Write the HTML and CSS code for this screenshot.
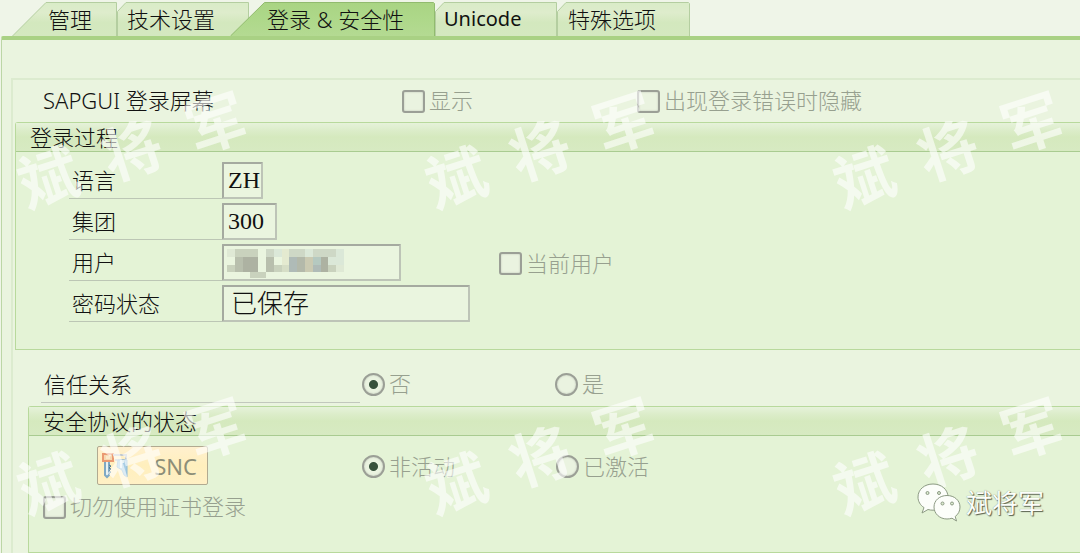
FILE: index.html
```html
<!DOCTYPE html>
<html lang="zh-CN">
<head>
<meta charset="utf-8">
<title>登录 &amp; 安全性</title>
<link rel="stylesheet" href="styles.css">
</head>
<body>
<main class="page">
  <nav class="tabs">
    <button type="button" class="tab tab-first">
      <svg class="tab-shape" viewBox="0 0 105 34"><path d="M.5 34 34 .5H104.500V34" fill="url(#tabFill)" stroke="#b4cea0"/></svg>
      <span>管理</span>
    </button>
    <button type="button" class="tab tab-second">
      <svg class="tab-shape" viewBox="0 0 132 34"><path d="M.5 34V9.500L9 .5H131.500V34" fill="url(#tabFill)" stroke="#b4cea0"/></svg>
      <span>技术设置</span>
    </button>
    <button type="button" class="tab tab-active">
      <svg class="tab-shape" viewBox="0 0 205 34"><path d="M.5 34 34.500.5H203.500L204.500 1.500V34" fill="url(#activeFill)" stroke="#91bb6e"/></svg>
      <span>登录 &amp; 安全性</span>
    </button>
    <button type="button" class="tab tab-unicode">
      <svg class="tab-shape" viewBox="0 0 122 34"><path d="M.5 34V9.500L9 .5H121.500V34" fill="url(#tabFill)" stroke="#b4cea0"/></svg>
      <span>Unicode</span>
    </button>
    <button type="button" class="tab tab-last">
      <svg class="tab-shape" viewBox="0 0 133 34"><path d="M.5 34V9.500L9 .5H131.500L132.500 1.500V34" fill="url(#tabFill)" stroke="#b4cea0"/>
        <defs>
          <linearGradient id="tabFill" x1="0" y1="0" x2="0" y2="1"><stop offset="0" stop-color="#d9ecc7"/><stop offset=".3" stop-color="#deeccc"/><stop offset=".6" stop-color="#d3e8be"/><stop offset="1" stop-color="#d4e8c0"/></linearGradient>
          <linearGradient id="activeFill" x1="0" y1="0" x2="0" y2="1"><stop offset="0" stop-color="#a9d483"/><stop offset=".5" stop-color="#aed88a"/><stop offset="1" stop-color="#b4da92"/></linearGradient>
        </defs>
      </svg>
      <span>特殊选项</span>
    </button>
  </nav>

  <section class="panel">
    <div class="frame">
      <div class="screen-row">
        <span class="row-title">SAPGUI 登录屏幕</span>
        <label class="option"><input type="checkbox" class="check">显示</label>
        <label class="option"><input type="checkbox" class="check">出现登录错误时隐藏</label>
      </div>

      <section class="group">
        <h2 class="group-title">登录过程</h2>
        <div class="fields">
          <div class="field">
            <label class="field-label" for="lang">语言</label>
            <input class="text-box latin w-lang" id="lang" type="text" value="ZH">
          </div>
          <div class="field">
            <label class="field-label" for="client">集团</label>
            <input class="text-box latin w-client" id="client" type="text" value="300">
          </div>
          <div class="field">
            <label class="field-label" for="user">用户</label>
            <div class="user-box">
              <input class="text-box w-user" id="user" type="text">
              <svg class="mosaic" viewBox="0 0 15 4" preserveAspectRatio="none" shape-rendering="crispEdges">
                <path fill="#dfe9d5" d="M0 0h1v1H0zM14 2h1v1h-1z"/>
                <path fill="#c9d2bd" d="M1 0h3v1H1zM0 2h1v1H0zM3 3h2v.7H3zM6 2h1v1H6zM13 2h1v1h-1z"/>
                <path fill="#ced8c6" d="M5 0h1v1H5zM8 0h2v1H8zM11 0h3v1h-3z"/>
                <path fill="#dbe8d8" d="M6 0h1v1H6zM10 0h1v1h-1zM14 0h1v2h-1zM13 1h1v1h-1z"/>
                <path fill="#e4ead0" d="M7 0h1v2H7z"/>
                <path fill="#d6dec6" d="M7 2h1v1H7z"/>
                <path fill="#b8bfad" d="M1 1h1v2H1zM5 1h1v2H5z"/>
                <path fill="#adb2a2" d="M2 1h2v2H2zM12 1h1v2h-1z"/>
                <path fill="#afbbb7" d="M8 1h1v2H8zM11 2h1v1h-1z"/>
                <path fill="#b3b9aa" d="M9 1h1v2H9z"/>
                <path fill="#cacab2" d="M10 1h1v2h-1z"/>
                <path fill="#b5c9c0" d="M11 1h1v1h-1z"/>
              </svg>
            </div>
            <label class="option current-user"><input type="checkbox" class="check">当前用户</label>
          </div>
          <div class="field">
            <label class="field-label" for="pwd">密码状态</label>
            <input class="text-box w-pwd" id="pwd" type="text" value="已保存">
          </div>
        </div>
      </section>

      <div class="trust-row">
        <span class="trust-label">信任关系</span>
        <label class="option"><input type="radio" class="radio" name="trust" checked>否</label>
        <label class="option"><input type="radio" class="radio" name="trust">是</label>
      </div>

      <section class="group group-security">
        <h2 class="group-title">安全协议的状态</h2>
        <div class="snc-row">
          <button type="button" class="snc">
            <svg class="snc-icon" viewBox="0 0 28 28" fill="none">
              <path d="M2 2h10v7H2z" fill="#f6d8b0" stroke="#ea9a72" stroke-width="2"/>
              <path d="M5 4h4v3H5z" fill="#fbe9c8"/>
              <path d="M12 3h13v5H14" stroke="#c3c9cc" stroke-width="2"/>
              <path d="M4 10v13l2 2 2-2V10" fill="#e8f2f2" stroke="#7fa9c4" stroke-width="2"/>
              <path d="M8 13l2 1-2 2 2 1-2 2 2 1-2 2" stroke="#4f7991" stroke-width="1"/>
              <path d="M17 8h9v17l-3-2-2-5-5-3z" fill="#a7cde4" stroke="#8db9d5"/>
              <path d="M20 8v8M22 8v3" stroke="#e4f0f2" stroke-width="2"/>
            </svg>
            <span>SNC</span>
          </button>
          <label class="option"><input type="radio" class="radio" name="snc" checked>非活动</label>
          <label class="option"><input type="radio" class="radio" name="snc">已激活</label>
        </div>
        <label class="option certificate"><input type="checkbox" class="check">切勿使用证书登录</label>
      </section>
    </div>
  </section>

  <div class="watermarks" aria-hidden="true">
    <div class="watermark"><span>斌</span><span>将</span><span>军</span></div>
    <div class="watermark"><span>斌</span><span>将</span><span>军</span></div>
    <div class="watermark"><span>斌</span><span>将</span><span>军</span></div>
    <div class="watermark"><span>斌</span><span>将</span><span>军</span></div>
    <div class="watermark"><span>斌</span><span>将</span><span>军</span></div>
    <div class="watermark"><span>斌</span><span>将</span><span>军</span></div>
  </div>

  <div class="signature">
    <svg class="wechat" viewBox="0 0 44 40">
      <g fill="#fcfefa" stroke="#8c9a83" stroke-width="1">
        <path d="M16 1C7.500 1 1 6.500 1 14c0 4.500 2.300 8.200 6 10.600L5 30l6-3.500c1.600.5 3.300.7 5 .7 8.500 0 15-5.800 15-13.200S24.500 1 16 1z"/>
        <path d="M30 12.500c-7.500 0-13 5-13 11.500s5.500 12 13 12c1.800 0 3.400-.3 5-.8l4.500 2.800-1.300-4.500C41.300 31.300 43 28 43 24c0-6.500-5.500-11.500-13-11.500z"/>
      </g>
      <g fill="#dcecd0" stroke="#8c9a83">
        <circle cx="10.500" cy="10" r="1.500"/><circle cx="22" cy="10" r="1.500"/>
        <circle cx="25.500" cy="20.500" r="1.500"/><circle cx="35" cy="20.500" r="1.500"/>
      </g>
    </svg>
    <span>斌将军</span>
  </div>
</main>
</body>
</html>
```
FILE: styles.css
```css
* { box-sizing: border-box; }

body {
  margin: 0;
  background: #eff5e8;
  color: #111;
  font-family: "Noto Sans", "Noto Sans CJK SC", sans-serif;
  font-size: 22px;
  font-weight: 300;
  line-height: 30px;
}

button, input { font: inherit; color: inherit; margin: 0; }

.page {
  position: relative;
  display: flex;
  flex-direction: column;
  min-height: 100vh;
  overflow: hidden;
}

/* Tab strip */
.tabs { display: flex; padding: 2px 0 0 12px; }

.tab {
  position: relative;
  height: 34px;
  padding: 0;
  border: 0;
  background: none;
  text-align: left;
  white-space: nowrap;
}

.tab span { position: relative; display: block; line-height: 34px; }
.tab-shape { position: absolute; inset: 0; width: 100%; height: 100%; }
.tab-first { width: 105px; padding-left: 36px; }
.tab-second { width: 132px; padding-left: 10px; }
.tab-active { width: 205px; padding-left: 37px; margin-left: -19px; }
.tab-unicode { width: 122px; padding-left: 9px; font-size: 20px; font-weight: 400; }
.tab-last { width: 133px; padding-left: 11px; }

/* Panel */
.panel {
  flex: 1;
  display: flex;
  flex-direction: column;
  margin-left: 1px;
  padding: 38px 0 0 9px;
  border-top: 4px solid #a9d184;
  border-left: 1px solid #bcd6a6;
  border-top-left-radius: 2px;
  background: #eaf4df;
}

.frame {
  flex: 1;
  border: solid #dcebcf;
  border-width: 2px 0 0 2px;
  padding-left: 2px;
}

.screen-row {
  display: grid;
  grid-template-columns: 359px 235px 1fr;
  align-items: center;
  height: 42px;
  padding: 0 0 2px 28px;
}

.option {
  display: inline-flex;
  align-items: center;
  gap: 4px;
  color: #97a08f;
  white-space: nowrap;
}

.check, .radio {
  appearance: none;
  flex: none;
  width: 23px;
  height: 23px;
  margin-top: 2px;
  border: 2px solid #9b9f96;
  background: #eaf3e0;
  box-shadow: inset 0 0 2px #b9beb3;
}

.check { border-radius: 3px; }
.radio { border-radius: 50%; }
.radio:checked { background: radial-gradient(circle, #38523c 4px, #eaf3e0 5px); }

/* Groups */
.group {
  border: solid #b8d99c;
  border-width: 1px 0 1px 1px;
  border-top-left-radius: 3px;
  background: #e4f3d6;
}

.group-title {
  height: 29px;
  margin: 0;
  padding-left: 14px;
  border-bottom: 1px solid #a9cb91;
  background: linear-gradient(#e6f2da, #dcedca 25%, #d5e9be 50%, #d7eac2);
  font-size: 22px;
  font-weight: inherit;
  line-height: 28px;
}

.fields {
  display: grid;
  gap: 4px;
  padding: 10px 0 27px 53px;
}

.field { display: flex; height: 37px; }

.field-label {
  width: 153px;
  padding-left: 3px;
  border-bottom: 1px solid #bcc6b5;
  line-height: 36px;
}

.text-box {
  display: block;
  height: 37px;
  padding: 0 7px 4px;
  border: 2px solid #bdc4b7;
  border-top-color: #a5aaa0;
  border-left-color: #a5aaa0;
  border-radius: 1px;
  background: #eaf5df;
  font-size: 26px;
  outline: 0;
}

.latin { padding: 0 0 0 4px; font-family: "Liberation Serif", serif; font-size: 24px; }
.w-lang { width: 41px; }
.w-client { width: 55px; }
.w-user { width: 179px; }
.w-pwd { width: 248px; }

.user-box { position: relative; }
.mosaic { position: absolute; left: 5px; top: 5px; width: 117px; height: 31px; }
.current-user { margin-left: 98px; }

.trust-row {
  display: grid;
  grid-template: 53px / 319px 193px 1fr;
  padding: 0 0 3px 26px;
}

.trust-row .option { margin: 18px 0 5px 2px; }

.trust-label {
  padding: 19px 0 0 3px;
  border-bottom: 1px solid #c2c8bd;
}

.group-security { margin-left: 13px; padding-bottom: 31px; }

.snc-row {
  display: grid;
  grid-template-columns: 265px 194px 1fr;
  align-items: center;
  padding: 10px 0 0 68px;
}

.snc {
  display: flex;
  align-items: center;
  justify-content: space-between;
  width: 111px;
  height: 39px;
  padding: 0 10px 0 3px;
  border: 1px solid #b1aa91;
  border-radius: 2px;
  background: linear-gradient(#fff0ce, #ffefbd 50%, #fff0c5);
  color: #8d8e78;
  font-weight: 400;
}

.snc-icon { width: 28px; height: 28px; }

.certificate { display: flex; margin: 6px 0 0 14px; }

/* Overlays */
.watermarks {
  position: absolute;
  top: -3px;
  left: -72px;
  display: grid;
  grid-template-columns: repeat(3, 408px);
  grid-auto-rows: 306px;
  place-items: center;
  pointer-events: none;
}

.watermark {
  display: flex;
  gap: 28px;
  transform: rotate(-18deg);
  color: rgba(255, 255, 255, .6);
  font-size: 60px;
  font-weight: 700;
  line-height: 60px;
}

.signature {
  position: absolute;
  right: 36px;
  bottom: 30px;
  display: flex;
  align-items: center;
  gap: 5px;
  color: #fcfefa;
  font-size: 26px;
  font-weight: 400;
  line-height: 40px;
  text-shadow: 1px 1px 1px #59614f, 0 0 1px #7c8871;
}

.wechat { width: 44px; height: 40px; }
```
